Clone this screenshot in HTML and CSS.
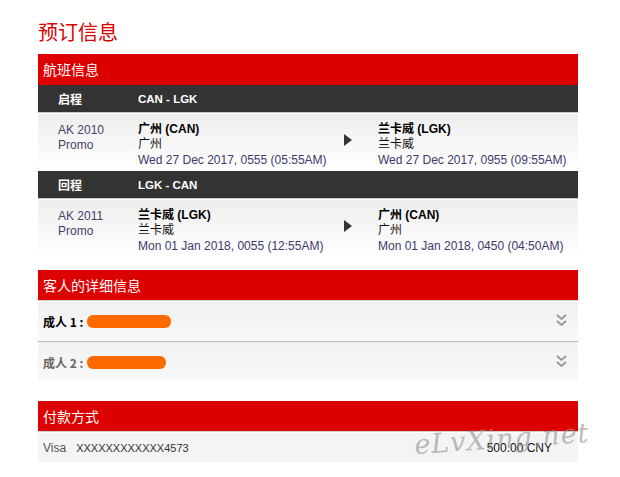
FILE: index.html
```html
<!DOCTYPE html>
<html lang="zh-CN">
<head>
  <meta charset="UTF-8" />
  <meta name="viewport" content="width=device-width, initial-scale=1.0" />
  <title>预订信息</title>
  <link rel="stylesheet" href="styles.css">
</head>
<body>

  <main class="page">
    <h1 class="page-title">预订信息</h1>

    <section class="panel">
      <div class="panel-head">航班信息</div>

      <div class="leg-bar">
        <span class="leg-label">启程</span>
        <span class="leg-route">CAN - LGK</span>
      </div>
      <div class="leg-row">
        <div class="flight-no">AK 2010<br>Promo</div>
        <div class="stop">
          <div class="stop-name">广州 (CAN)</div>
          <div>广州</div>
          <div class="stop-time">Wed 27 Dec 2017, 0555 (05:55AM)</div>
        </div>
        <div class="leg-arrow">
          <svg width="8" height="12" viewBox="0 0 8 12"><polygon points="0,0 8,6 0,12" fill="#333"/></svg>
        </div>
        <div class="stop">
          <div class="stop-name">兰卡威 (LGK)</div>
          <div>兰卡威</div>
          <div class="stop-time">Wed 27 Dec 2017, 0955 (09:55AM)</div>
        </div>
      </div>

      <div class="leg-bar">
        <span class="leg-label">回程</span>
        <span class="leg-route">LGK - CAN</span>
      </div>
      <div class="leg-row">
        <div class="flight-no">AK 2011<br>Promo</div>
        <div class="stop">
          <div class="stop-name">兰卡威 (LGK)</div>
          <div>兰卡威</div>
          <div class="stop-time">Mon 01 Jan 2018, 0055 (12:55AM)</div>
        </div>
        <div class="leg-arrow">
          <svg width="8" height="12" viewBox="0 0 8 12"><polygon points="0,0 8,6 0,12" fill="#333"/></svg>
        </div>
        <div class="stop">
          <div class="stop-name">广州 (CAN)</div>
          <div>广州</div>
          <div class="stop-time">Mon 01 Jan 2018, 0450 (04:50AM)</div>
        </div>
      </div>
    </section>

    <section class="panel guests">
      <div class="panel-head">客人的详细信息</div>

      <div class="guest-row">
        <span class="guest-label">成人 1 :</span>
        <span class="redact redact-1"></span>
        <svg class="chevron" width="11" height="13" viewBox="0 0 11 13"><polyline points="1,1 5.5,5 10,1" fill="none" stroke="#999" stroke-width="2"/><polyline points="1,7 5.5,11 10,7" fill="none" stroke="#999" stroke-width="2"/></svg>
      </div>
      <div class="guest-row second">
        <span class="guest-label">成人 2 :</span>
        <span class="redact redact-2"></span>
        <svg class="chevron" width="11" height="13" viewBox="0 0 11 13"><polyline points="1,1 5.5,5 10,1" fill="none" stroke="#999" stroke-width="2"/><polyline points="1,7 5.5,11 10,7" fill="none" stroke="#999" stroke-width="2"/></svg>
      </div>
    </section>

    <section class="panel payment">
      <div class="panel-head">付款方式</div>
      <div class="pay-row">
        <span class="pay-card">Visa<span class="pay-number">XXXXXXXXXXXX4573</span></span>
        <span class="pay-amount">500.00 CNY</span>
      </div>
      <div class="watermark">eLvXing.net</div>
    </section>
  </main>

</body>
</html>
```

FILE: styles.css
```css
* {
  box-sizing: border-box;
  margin: 0;
  padding: 0;
}

body {
  font-family: "Liberation Sans", Arial, "Noto Sans CJK SC", sans-serif;
  font-size: 12px;
  color: #333;
  background: #fff;
}

.page {
  width: 540px;
  margin-left: 38px;
  padding-top: 19px;
}

.page-title {
  font-family: "Noto Sans CJK SC", sans-serif;
  font-size: 20px;
  font-weight: normal;
  line-height: 26px;
  color: #dd0000;
  margin-bottom: 9px;
}

.panel {
  position: relative;
}

.panel-head {
  background: #dd0000;
  color: #fff;
  font-family: "Noto Sans CJK SC", sans-serif;
  font-size: 14px;
  height: 31px;
  line-height: 31px;
  padding-left: 5px;
}

.leg-bar {
  display: flex;
  align-items: center;
  background: #333;
  color: #fff;
  height: 28px;
  padding-left: 20px;
  border-bottom: 1px solid #c8c8c8;
  margin-bottom: 1px;
}

.leg-label {
  width: 80px;
  font-family: "Noto Sans CJK SC", sans-serif;
  font-weight: bold;
  font-size: 12px;
}

.leg-route {
  font-weight: bold;
  font-size: 11.5px;
}

.leg-row {
  display: grid;
  grid-template-columns: 80px 206px 34px 1fr;
  height: 57px;
  padding: 7px 0 0 20px;
  line-height: 15px;
  background: linear-gradient(#eeeeee, #ffffff);
}

.flight-no {
  color: #4a3d6b;
  padding-top: 2px;
}

.stop {
  color: #111;
}

.stop-name {
  color: #000;
  font-weight: bold;
  padding-top: 1px;
}

.stop-time {
  color: #3d3a6b;
  padding-top: 1px;
}

.leg-arrow {
  padding-top: 13px;
}

.guests {
  margin-top: 13px;
}

.guests .panel-head,
.payment .panel-head {
  border-bottom: 1px solid #cfcfcf;
  margin-bottom: 1px;
}

.guest-row {
  display: flex;
  align-items: center;
  height: 39px;
  padding: 0 11px 0 5px;
  background: linear-gradient(#f0f0f0, #f9f9f9);
}

.guest-row.second {
  border-top: 1px solid #bbb;
  height: 40px;
  padding-top: 1px;
  background: linear-gradient(#f2f2f2, #f8f8f8);
}

.guest-label {
  font-family: "Noto Sans CJK SC", sans-serif;
  font-weight: bold;
  font-size: 12px;
  color: #000;
}

.second .guest-label {
  color: #666;
}

.redact {
  display: inline-block;
  height: 13px;
  background: #ff6a00;
  border-radius: 6px;
  margin-left: 4px;
}

.redact-1 {
  width: 84px;
}

.redact-2 {
  width: 79px;
}

.chevron {
  margin-left: auto;
  margin-top: -2px;
}

.payment {
  margin-top: 20px;
}

.pay-row {
  display: flex;
  align-items: center;
  justify-content: space-between;
  height: 29px;
  padding: 0 26px 0 5px;
  background: #f4f4f4;
}

.pay-card {
  color: #555;
}

.pay-number {
  font-size: 11px;
  color: #333;
  margin-left: 10px;
}

.pay-amount {
  color: #111;
}

.watermark {
  position: absolute;
  left: 376px;
  top: 22px;
  font-family: "DejaVu Serif", serif;
  font-style: italic;
  font-size: 27px;
  letter-spacing: 1px;
  color: rgba(150, 150, 150, 0.65);
  transform: rotate(-4deg);
  white-space: nowrap;
}
```
